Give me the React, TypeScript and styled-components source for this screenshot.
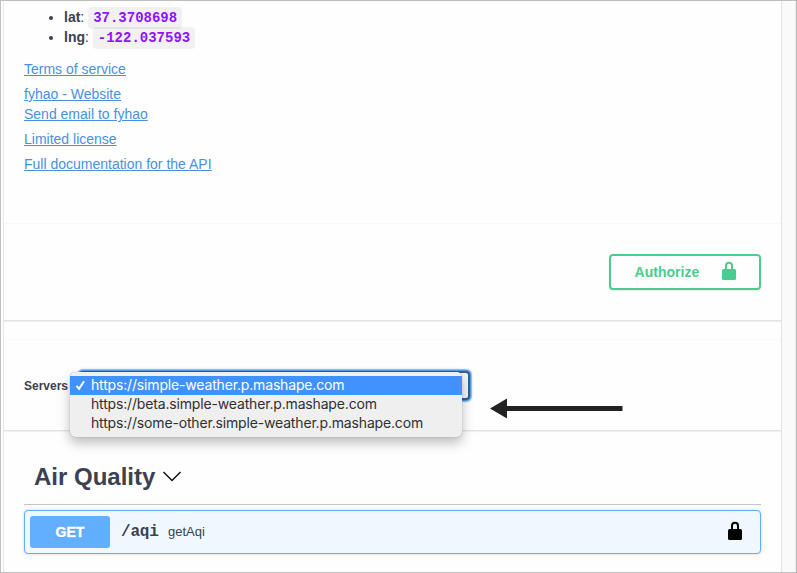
import React from "react";
import styled, { createGlobalStyle } from "styled-components";

const GlobalStyle = createGlobalStyle`
  * { box-sizing: border-box; }
  html, body { margin: 0; padding: 0; background: #fff; }
  body { font-family: "Liberation Sans", Arial, sans-serif; color: #3b4151; overflow: hidden; }
`;

const Frame = styled.div`
  width: 797px;
  height: 573px;
  border: 1px solid #bfbfbf;
  border-right-color: #b8b8b8;
  padding-left: 2px;
  display: flex;
  overflow: hidden;
`;

const Page = styled.main`
  width: 778px;
  flex: none;
  border-left: 1px solid #e7e7e7;
  background: #fefefe;
  display: flex;
  flex-direction: column;
`;

const Scrollbar = styled.div`
  flex: 1;
  background: #fafafa;
  border-left: 1px solid #e3e3e3;
  border-right: 1px solid #ededed;
`;

const Info = styled.section`
  height: 222px;
  flex: none;
  padding: 6px 20px 0;
  font-size: 14px;
  line-height: 20px;
`;

const Coordinates = styled.ul`
  margin: 0;
  padding: 0 0 0 40px;
  list-style: disc;
`;

const Coordinate = styled.li`
  height: 20px;
  white-space: pre;
`;

const Code = styled.code`
  font: bold 14px/16px "Liberation Mono", "Courier New", monospace;
  color: #9012fe;
  background: rgba(0, 0, 0, 0.05);
  border-radius: 4px;
  padding: 3px 5px;
`;

const Links = styled.div`
  display: flex;
  flex-direction: column;
  align-items: flex-start;
  gap: 5px;
  margin-top: 12px;
`;

const Contact = styled.div`
  display: flex;
  flex-direction: column;
  align-items: flex-start;
`;

const Link = styled.a`
  color: #4990e2;
  text-decoration: underline;
  white-space: nowrap;
`;

const AuthBar = styled.section`
  height: 98px;
  flex: none;
  border-top: 1px solid #f8f8f8;
  border-bottom: 1px solid #e2e2e2;
  box-shadow: 0 1px 1px rgba(0, 0, 0, 0.05);
  padding: 30px 20px 0;
  display: flex;
  justify-content: flex-end;
`;

const AuthorizeButton = styled.button`
  width: 152px;
  height: 36px;
  border: 2px solid #49cc90;
  border-radius: 4px;
  background: transparent;
  color: #49cc90;
  box-shadow: 0 1px 2px rgba(0, 0, 0, 0.1);
  font: bold 14px/20px "Liberation Sans", Arial, sans-serif;
  letter-spacing: 0.03px;
  padding: 0 22px 0 23.5px;
  display: flex;
  align-items: center;
  justify-content: space-between;
`;

const ServerBar = styled.section`
  height: 92px;
  flex: none;
  margin-top: 18px;
  border-top: 1px solid #f9f9f9;
  border-bottom: 1px solid #e2e2e2;
  box-shadow: 0 1px 1px rgba(0, 0, 0, 0.05);
  padding: 31px 20px 0;
  display: flex;
  align-items: flex-start;
`;

const ServerLabel = styled.label`
  width: 55px;
  font-size: 12px;
  font-weight: bold;
  line-height: 31px;
`;

const Select = styled.div`
  position: relative;
  width: 391px;
  height: 29px;
  border: 2px solid #35618f;
  border-radius: 4px;
  background: #f5f5f5;
  box-shadow: 0 0 0 1px #549be2, 0 0 0 2px #8fc2f5, 0 0 2px 2px #b4d7fa;
`;

const Menu = styled.div`
  position: absolute;
  left: -11px;
  top: -1px;
  width: 392px;
  height: 65px;
  padding: 4px 0;
  border-radius: 5px;
  background: #efefef;
  box-shadow: 0 0 1px rgba(0, 0, 0, 0.45), 0 6px 12px rgba(0, 0, 0, 0.26);
  z-index: 2;
`;

const Option = styled.div<{ $selected?: boolean }>`
  height: 19px;
  display: flex;
  font-family: Inter, sans-serif;
  font-size: 14px;
  line-height: 17px;
  letter-spacing: -0.165px;
  white-space: nowrap;
  color: ${(p) => (p.$selected ? "#fff" : "#303030")};
  background: ${(p) => (p.$selected ? "#3f92ff" : "transparent")};
`;

const CheckSlot = styled.span`
  width: 21px;
  height: 19px;
  flex: none;
`;

const Pointer = styled.svg`
  position: absolute;
  left: 409px;
  top: 25px;
`;

const TagSection = styled.section`
  padding: 25px 20px 0;
`;

const TagHeading = styled.h2`
  height: 49px;
  margin: 0 0 5px;
  padding: 6px 10px 0;
  border-bottom: 1px solid #c3c4c8;
  display: flex;
  gap: 7px;
  font-size: 24px;
  line-height: 30px;
`;

const Operation = styled.div`
  height: 44px;
  border: 1px solid #61affe;
  border-radius: 4px;
  background: #eff7ff;
  box-shadow: 0 0 3px rgba(0, 0, 0, 0.19);
  padding: 0 17px 0 5px;
  display: flex;
  align-items: center;
`;

const Method = styled.span`
  width: 80px;
  height: 32px;
  border-radius: 3px;
  background: #61affe;
  color: #fff;
  text-align: center;
  font-size: 14px;
  font-weight: bold;
  line-height: 32px;
  -webkit-text-stroke: 0.4px #fff;
  text-shadow: 0 1px 0 rgba(0, 0, 0, 0.1);
`;

const Path = styled.span`
  margin-left: 11px;
  width: 47px;
  font: bold 16px/20px "Liberation Mono", "Courier New", monospace;
  letter-spacing: -0.2px;
`;

const Summary = styled.span`
  flex: 1;
  font-size: 13px;
  line-height: 20px;
`;

const Lock = styled.svg`
  display: block;
  flex: none;
  margin-bottom: 2px;
`;

const LockIcon = () => (
  <Lock width="16" height="20" viewBox="0 0 16 20">
    <path
      d="M5 9V4.800a3 3 0 0 1 6 0V9"
      fill="none"
      stroke="currentColor"
      strokeWidth="2"
    />
    <rect x="1" y="8" width="14" height="11" rx="1.500" fill="currentColor" />
  </Lock>
);

const OperationLock = styled.span`
  display: flex;
  color: #000;
`;

const servers = [
  "https://simple-weather.p.mashape.com",
  "https://beta.simple-weather.p.mashape.com",
  "https://some-other.simple-weather.p.mashape.com",
];

export default function App() {
  return (
    <>
      <GlobalStyle />
      <Frame>
        <Page>
          <Info>
            <Coordinates>
              <Coordinate><b>lat</b>: <Code>37.3708698</Code></Coordinate>
              <Coordinate><b>lng</b>: <Code>-122.037593</Code></Coordinate>
            </Coordinates>
            <Links>
              <Link>Terms of service</Link>
              <Contact>
                <Link>fyhao - Website</Link>
                <Link>Send email to fyhao</Link>
              </Contact>
              <Link>Limited license</Link>
              <Link>Full documentation for the API</Link>
            </Links>
          </Info>
          <AuthBar>
            <AuthorizeButton>
              Authorize
              <LockIcon />
            </AuthorizeButton>
          </AuthBar>
          <ServerBar>
            <ServerLabel>Servers</ServerLabel>
            <Select>
              <Menu>
                {servers.map((url, i) => (
                  <Option key={url} $selected={i === 0}>
                    <CheckSlot>
                      {i === 0 && (
                        <svg width="21" height="19" viewBox="0 0 21 19">
                          <path d="M6.500 9.800 9.100 12.800 14 5.200" fill="none" stroke="#fff" strokeWidth="2" />
                        </svg>
                      )}
                    </CheckSlot>
                    {url}
                  </Option>
                ))}
              </Menu>
              <Pointer width="134" height="22" viewBox="0 0 134 22">
                <path d="M0 10.500 17 .5v7.500h115.500v5H17v7.500z" fill="#222" />
              </Pointer>
            </Select>
          </ServerBar>
          <TagSection>
            <TagHeading>
              Air Quality
              <svg width="20" height="30" viewBox="0 0 20 30">
                <path d="M1.500 10 10 18.500l8.500-8.500" fill="none" stroke="#111" strokeWidth="1.500" />
              </svg>
            </TagHeading>
            <Operation>
              <Method>GET</Method>
              <Path>/aqi</Path>
              <Summary>getAqi</Summary>
              <OperationLock><LockIcon /></OperationLock>
            </Operation>
          </TagSection>
        </Page>
        <Scrollbar />
      </Frame>
    </>
  );
}
